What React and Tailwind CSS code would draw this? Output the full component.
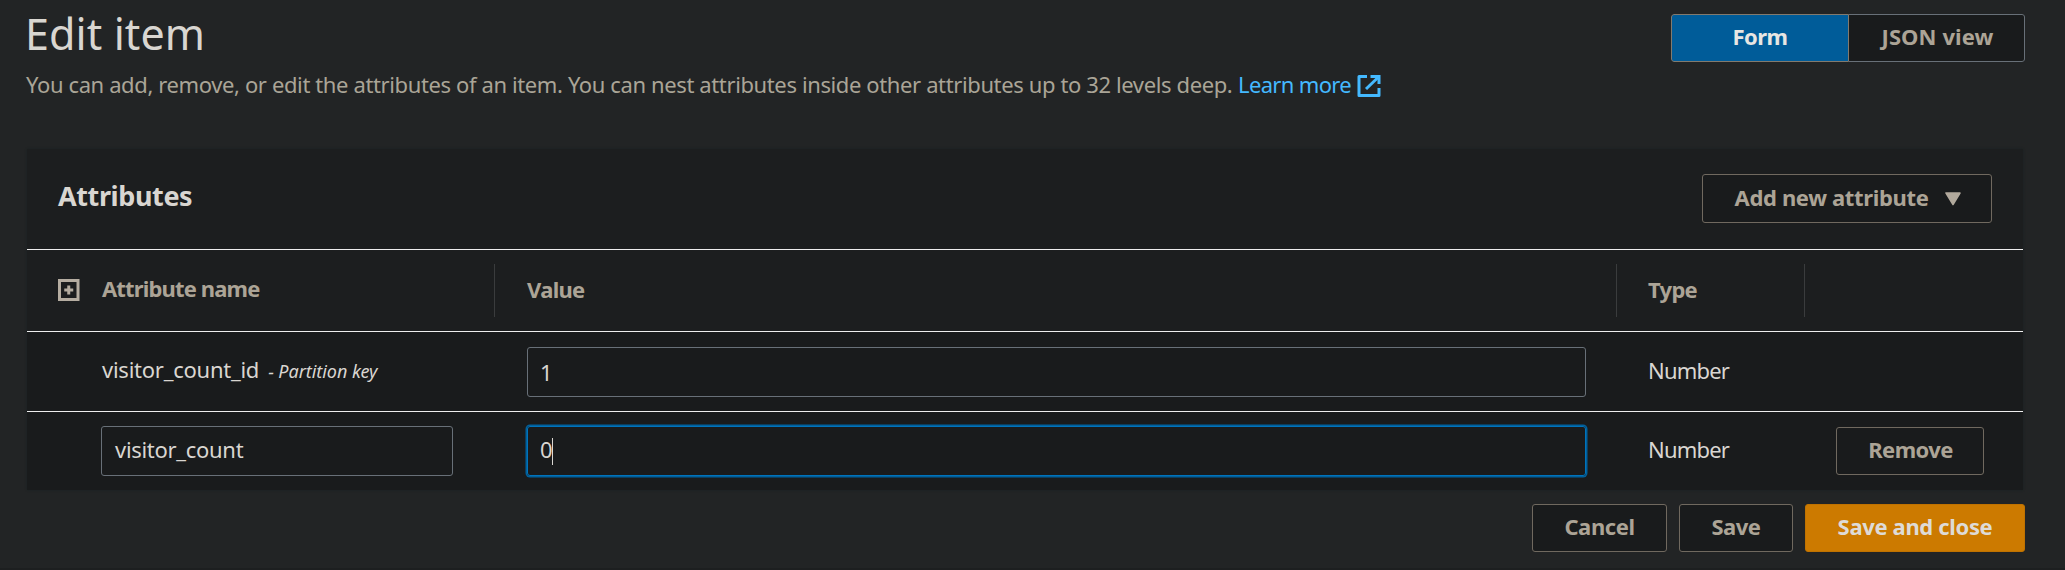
import React from "react";

function ExternalIcon() {
  return (
    <svg className="mt-[5px] ml-[6px] h-6 w-6" viewBox="0 0 24 24" fill="none" stroke="#44b9ff" strokeWidth="3" strokeLinejoin="round">
      <path d="M10 2.5H2V21.5H22V14" />
      <path d="M13.5 2.5H22V10" strokeLinejoin="miter" />
      <path d="M9 15L21 3.5" />
    </svg>
  );
}

function ExpandIcon() {
  return (
    <svg className="mb-px h-[22px] w-[22px]" viewBox="0 0 22 22" fill="none" stroke="#b5ada1" strokeWidth="3">
      <rect x="1.5" y="1.5" width="18.5" height="19" />
      <path d="M10.75 6.5V15.5M6.25 11H15.25" />
    </svg>
  );
}

function Button({ className = "", children }) {
  return (
    <button
      className={`flex shrink-0 items-center justify-center rounded-[3px] border border-[#70695f] bg-[#191b1c] font-bold text-[#aca496] ${className}`}
    >
      {children}
    </button>
  );
}

const columns = "grid grid-cols-[468px_1122px_188px_218px]";

export default function App() {
  return (
    <main className="h-[570px] w-[2065px] overflow-hidden border-b-2 border-[#1d1f20] bg-[#222425] font-['Noto_Sans',sans-serif] text-[22px] leading-[30px] text-[#d9d6d1]">
      <header className="flex h-[149px] justify-between pr-10 pl-[26px]">
        <div>
          <h1 className="mt-1 -ml-px text-[43px] leading-[60px] tracking-[0.1px]">Edit item</h1>
          <div className="mt-[5px] flex whitespace-nowrap text-[#aaa597]">
            <p className="w-[1212px] tracking-[-0.38px]">
              You can add, remove, or edit the attributes of an item. You can nest attributes inside other attributes up to 32 levels deep.
            </p>
            <a className="flex text-[#44b9ff]">
              <span className="w-[113px] tracking-[-0.65px]">Learn more</span>
              <ExternalIcon />
            </a>
          </div>
        </div>
        <div className="mt-[14px] flex h-12 w-[354px] overflow-hidden rounded-[3px] font-bold">
          <button className="w-[178px] rounded-l-[3px] border border-[#827a6e] bg-[#005c99] pb-[4px] tracking-[-0.5px] text-[#e8e6e3]">
            Form
          </button>
          <button className="w-[176px] rounded-r-[3px] border border-l-0 border-[#687078] bg-[#191b1c] pb-[4px] pl-[2px] tracking-[0.1px] text-[#aca496]">
            JSON view
          </button>
        </div>
      </header>

      <section className="ml-[27px] h-[341px] w-[1996px] bg-[#191b1c] shadow-[0_0_2px_#172022]">
        <div className="flex h-[101px] items-start justify-between border-b border-[#eeeeee] bg-[#1c1e1f] pr-[31px] pl-[31px]">
          <h2 className="mt-8 text-[27px] leading-[30px] font-bold tracking-[-0.4px]">Attributes</h2>
          <Button className="mt-[25px] h-[49px] w-[290px] gap-[17px] pb-[3px] pl-[2px] tracking-[-0.35px]">
            Add new attribute
            <svg className="mt-[3px] h-[14px] w-4" viewBox="0 0 16 14" fill="#b1a99c" stroke="#b1a99c" strokeWidth="1.5" strokeLinejoin="round">
              <path d="M1 1H15L8 12.5Z" />
            </svg>
          </Button>
        </div>

        <div className={`${columns} h-[82px] border-b border-[#eeeeee] bg-[#1c1e1f] py-[14px] font-bold text-[#aca496]`}>
          <div className="flex items-center border-r border-[#3a3c3d] pl-[31px]">
            <ExpandIcon />
            <span className="ml-[22px] pb-[5px] tracking-[-0.85px]">Attribute name</span>
          </div>
          <div className="flex items-center border-r border-[#3a3c3d] pb-[3px] pl-8 tracking-[-0.7px]">Value</div>
          <div className="flex items-center border-r border-[#3a3c3d] pb-[3px] pl-[31px] tracking-[-0.7px]">Type</div>
          <div />
        </div>

        <div className={`${columns} h-20 items-center border-b border-[#eeeeee]`}>
          <div className="flex items-baseline pb-[4px] pl-[75px] whitespace-nowrap">
            <span className="tracking-[-0.25px]">visitor_count_id</span>
            <em className="ml-[9px] text-[18px] tracking-[-0.05px]">- Partition key</em>
          </div>
          <div className="ml-8 flex h-[50px] w-[1059px] items-center rounded-[3px] border border-[#687078] pl-[12px]">1</div>
          <div className="pb-[3px] pl-[31px] tracking-[-0.8px]">Number</div>
        </div>

        <div className={`${columns} h-[78px] items-center`}>
          <div className="ml-[74px] flex h-[50px] w-[352px] items-center rounded-[3px] border border-[#687078] pb-[4px] pl-[13px] tracking-[-0.3px]">
            visitor_count
          </div>
          <div className="ml-8 flex h-[50px] w-[1059px] items-center rounded-[3px] border border-[#0073bb] pl-[12px] shadow-[0_0_0_1.5px_#00609c]">
            <span className="w-3 pb-[4px]">0</span>
            <span className="h-[27px] w-px bg-[#d9d6d1]" />
          </div>
          <div className="pb-[4px] pl-[31px] tracking-[-0.8px]">Number</div>
          <Button className="ml-[31px] h-12 w-[148px] pb-[4px] pl-px tracking-[-0.6px]">Remove</Button>
        </div>
      </section>

      <footer className="mt-[14px] flex justify-end gap-3 pr-10">
        <Button className="h-12 w-[135px] pb-[4px] tracking-[-0.4px]">Cancel</Button>
        <Button className="h-12 w-[114px] pb-[4px] tracking-[-0.5px]">Save</Button>
        <button className="h-12 w-[220px] rounded-[3px] border border-[#c07200] bg-[#cc7a00] pb-[4px] font-bold tracking-[-0.35px] text-[#dedbd7]">
          Save and close
        </button>
      </footer>
    </main>
  );
}
